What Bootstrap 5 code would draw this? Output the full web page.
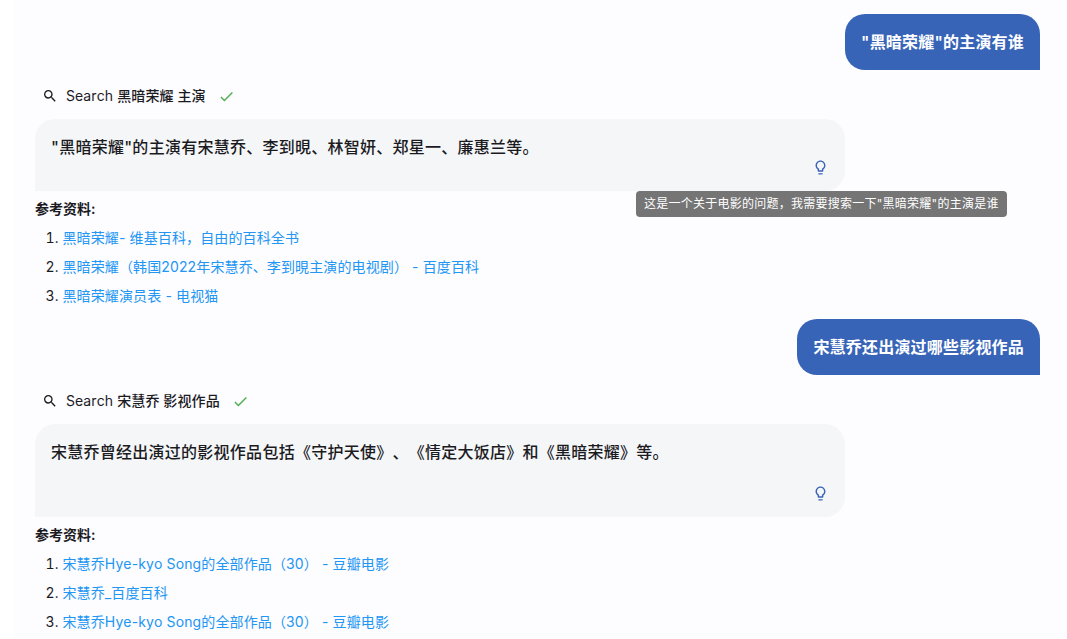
<!DOCTYPE html>
<html lang="zh">
<head>
<meta charset="utf-8">
<title>Chat</title>
<link href="https://cdn.jsdelivr.net/npm/bootstrap@5.3.0/dist/css/bootstrap.min.css" rel="stylesheet">
<style>
html,body{height:100%;overflow:hidden;background:#fff}
body{font-family:Inter,"Noto Sans CJK SC",sans-serif;color:#1b1b1f;text-spacing-trim:space-all;font-kerning:none}
.chat-panel{margin:0 2px 0 14px;height:639px;background:#fdfcff;padding:14px 25px 0 21px;overflow:hidden}
.user-bubble{background:#3864b8;color:#fff;font-size:16px;letter-spacing:.2px;font-weight:600;line-height:24px;padding:16px;border-radius:20px 20px 0 20px}
.tool-row{font-size:14px;letter-spacing:.1px;height:20px;line-height:20px;padding-left:7px;margin-top:16px;margin-bottom:13px}
.tool-row svg{flex:none}
.tool-name{margin-left:8px;margin-right:12px}
.tool-name b{font-weight:500}
.answer-bubble{position:relative;width:810px;background:#f5f6f8;border-radius:20px 20px 20px 0;padding:16px 16px 0;font-size:16px;letter-spacing:.26px;font-weight:500;line-height:24px}
.answer-text{margin:0;height:24px}
.answer-text.tall{height:45px}
.bulb-row{height:32px}
.hint-tip{position:absolute;left:601px;top:72px;width:371px;height:26px;background:#757575;color:#fff;font-size:12px;letter-spacing:.25px;font-weight:400;line-height:26px;padding-left:8px;border-radius:4px;white-space:nowrap;z-index:2}
.ref-title{font-size:14px;font-weight:600;line-height:20px;margin-top:8px;margin-bottom:9px}
.ref-list{margin:0;padding-left:27.5px;font-size:14px;letter-spacing:.12px;line-height:20px}
.ref-list li{margin-bottom:9px}
.ref-list a{color:#2196f3;text-decoration:none}
.block-two{margin-top:13px}
</style>
</head>
<body>
<div class="chat-panel">
  <div class="d-flex justify-content-end"><div class="user-bubble">"黑暗荣耀"的主演有谁</div></div>

  <div class="tool-row d-flex align-items-center">
    <svg width="16" height="16" viewBox="0 0 24 24" fill="#1b1b1f"><path d="M15.5 14h-.79l-.28-.27A6.471 6.471 0 0 0 16 9.5 6.5 6.5 0 1 0 9.5 16c1.61 0 3.09-.59 4.23-1.57l.27.28v.79l5 4.99L20.49 19l-4.99-5zm-6 0C7.01 14 5 11.99 5 9.5S7.01 5 9.5 5 14 7.01 14 9.5 11.99 14 9.5 14z"/></svg>
    <span class="tool-name">Search <b>黑暗荣耀 主演</b></span>
    <svg width="17" height="17" viewBox="0 0 24 24" fill="#4caf50"><path d="M9 16.17 4.83 12l-1.42 1.41L9 19 21 7l-1.41-1.41z"/></svg>
  </div>

  <div class="answer-bubble">
    <p class="answer-text">"黑暗荣耀"的主演有宋慧乔、李到晛、林智妍、郑星一、廉惠兰等。</p>
    <div class="bulb-row d-flex justify-content-end">
      <svg width="17" height="17" viewBox="0 0 24 24" fill="#3864b8"><path d="M9 21c0 .55.45 1 1 1h4c.55 0 1-.45 1-1v-1H9v1zm3-19C8.14 2 5 5.14 5 9c0 2.38 1.19 4.47 3 5.74V17c0 .55.45 1 1 1h6c.55 0 1-.45 1-1v-2.26c1.81-1.27 3-3.36 3-5.74 0-3.86-3.14-7-7-7zm2.85 11.1-.85.6V16h-4v-2.3l-.85-.6A4.997 4.997 0 0 1 7 9c0-2.76 2.24-5 5-5s5 2.24 5 5c0 1.63-.8 3.16-2.15 4.1z"/></svg>
    </div>
    <div class="hint-tip">这是一个关于电影的问题，我需要搜索一下"黑暗荣耀"的主演是谁</div>
  </div>

  <div class="ref-title">参考资料:</div>
  <ol class="ref-list">
    <li><a href="#">黑暗荣耀- 维基百科，自由的百科全书</a></li>
    <li><a href="#">黑暗荣耀（韩国2022年宋慧乔、李到晛主演的电视剧） - 百度百科</a></li>
    <li><a href="#">黑暗荣耀演员表 - 电视猫</a></li>
  </ol>

  <div class="d-flex justify-content-end block-two"><div class="user-bubble">宋慧乔还出演过哪些影视作品</div></div>

  <div class="tool-row d-flex align-items-center">
    <svg width="16" height="16" viewBox="0 0 24 24" fill="#1b1b1f"><path d="M15.5 14h-.79l-.28-.27A6.471 6.471 0 0 0 16 9.5 6.5 6.5 0 1 0 9.5 16c1.61 0 3.09-.59 4.23-1.57l.27.28v.79l5 4.99L20.49 19l-4.99-5zm-6 0C7.01 14 5 11.99 5 9.5S7.01 5 9.5 5 14 7.01 14 9.5 11.99 14 9.5 14z"/></svg>
    <span class="tool-name">Search <b>宋慧乔 影视作品</b></span>
    <svg width="17" height="17" viewBox="0 0 24 24" fill="#4caf50"><path d="M9 16.17 4.83 12l-1.42 1.41L9 19 21 7l-1.41-1.41z"/></svg>
  </div>

  <div class="answer-bubble">
    <p class="answer-text tall">宋慧乔曾经出演过的影视作品包括《守护天使》、《情定大饭店》和《黑暗荣耀》等。</p>
    <div class="bulb-row d-flex justify-content-end">
      <svg width="17" height="17" viewBox="0 0 24 24" fill="#3864b8"><path d="M9 21c0 .55.45 1 1 1h4c.55 0 1-.45 1-1v-1H9v1zm3-19C8.14 2 5 5.14 5 9c0 2.38 1.19 4.47 3 5.74V17c0 .55.45 1 1 1h6c.55 0 1-.45 1-1v-2.26c1.81-1.27 3-3.36 3-5.74 0-3.86-3.14-7-7-7zm2.85 11.1-.85.6V16h-4v-2.3l-.85-.6A4.997 4.997 0 0 1 7 9c0-2.76 2.24-5 5-5s5 2.24 5 5c0 1.63-.8 3.16-2.15 4.1z"/></svg>
    </div>
  </div>

  <div class="ref-title">参考资料:</div>
  <ol class="ref-list">
    <li><a href="#">宋慧乔Hye-kyo Song的全部作品（30） - 豆瓣电影</a></li>
    <li><a href="#">宋慧乔_百度百科</a></li>
    <li><a href="#">宋慧乔Hye-kyo Song的全部作品（30） - 豆瓣电影</a></li>
  </ol>
</div>
<script src="https://cdn.jsdelivr.net/npm/bootstrap@5.3.0/dist/js/bootstrap.bundle.min.js"></script>
</body>
</html>
